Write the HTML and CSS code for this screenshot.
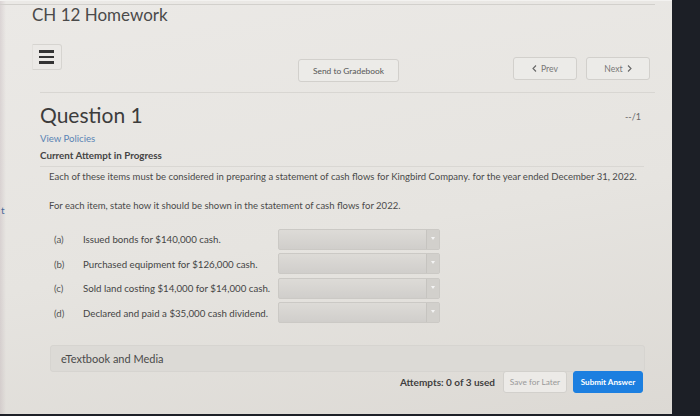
FILE: index.html
```html
<!DOCTYPE html>
<html lang="en">
<head>
    <meta charset="UTF-8">
    <meta name="viewport" content="width=device-width, initial-scale=1.0">
    <title>CH 12 Homework</title>
    <link rel="stylesheet" href="styles.css">
</head>
<body>
    <div class="screen">
        <div class="page">
            <span class="edge-mark">t</span>
            <h1 class="assignment-title">CH 12 Homework</h1>
            <div class="toolbar">
                <button class="menu-btn" aria-label="Menu">
                    <span></span><span></span><span></span>
                </button>
                <button class="btn btn-gradebook">Send to Gradebook</button>
                <div class="pager">
                    <button class="btn btn-nav">
                        <svg width="5" height="7" viewBox="0 0 5 7"><path d="M4 0.5 L1 3.5 L4 6.5" fill="none" stroke="#666" stroke-width="1.1"/></svg>
                        Prev
                    </button>
                    <button class="btn btn-nav">
                        Next
                        <svg width="5" height="7" viewBox="0 0 5 7"><path d="M1 0.5 L4 3.5 L1 6.5" fill="none" stroke="#666" stroke-width="1.1"/></svg>
                    </button>
                </div>
            </div>
            <div class="question">
                <div class="question-head">
                    <h2>Question 1</h2>
                    <span class="score">--/1</span>
                </div>
                <a class="policies" href="#">View Policies</a>
                <p class="attempt-state">Current Attempt in Progress</p>
                <div class="question-body">
                    <p>Each of these items must be considered in preparing a statement of cash flows for Kingbird Company. for the year ended December 31, 2022.</p>
                    <p>For each item, state how it should be shown in the statement of cash flows for 2022.</p>
                    <div class="items">
                        <div class="item">
                            <span class="item-label">(a)</span>
                            <span class="item-text">Issued bonds for $140,000 cash.</span>
                            <div class="dropdown"><span class="caret"></span></div>
                        </div>
                        <div class="item">
                            <span class="item-label">(b)</span>
                            <span class="item-text">Purchased equipment for $126,000 cash.</span>
                            <div class="dropdown"><span class="caret"></span></div>
                        </div>
                        <div class="item">
                            <span class="item-label">(c)</span>
                            <span class="item-text">Sold land costing $14,000 for $14,000 cash.</span>
                            <div class="dropdown"><span class="caret"></span></div>
                        </div>
                        <div class="item">
                            <span class="item-label">(d)</span>
                            <span class="item-text">Declared and paid a $35,000 cash dividend.</span>
                            <div class="dropdown"><span class="caret"></span></div>
                        </div>
                    </div>
                    <div class="media">eTextbook and Media</div>
                </div>
                <div class="actions">
                    <span class="attempts">Attempts: 0 of 3 used</span>
                    <button class="btn btn-save">Save for Later</button>
                    <button class="btn btn-submit">Submit Answer</button>
                </div>
            </div>
        </div>
        <div class="bezel"></div>
    </div>
</body>
</html>
```

FILE: styles.css
```css
body {
    margin: 0;
    font-family: 'Lato', 'Liberation Sans', sans-serif;
    color: #3c3c3c;
    background: #1d2027;
}
.screen {
    display: flex;
    height: 416px;
    overflow: hidden;
}
.page {
    position: relative;
    width: 672px;
    height: 414px;
    padding: 0 28px 0 32px;
    box-sizing: border-box;
    background: linear-gradient(170deg, #ebe9e6 0%, #e6e4e0 55%, #dcd9d4 100%);
    border-top: 1px solid #f3f2f0;
}
.page::before {
    content: "";
    position: absolute;
    left: 0;
    top: 0;
    bottom: 0;
    width: 6px;
    background: linear-gradient(to right, rgba(170, 150, 160, 0.25), rgba(170, 150, 160, 0));
}
.page::after {
    content: "";
    position: absolute;
    left: 0;
    right: 17px;
    top: 3px;
    border-bottom: 1px solid #d2d0cc;
}
.bezel {
    flex: 1;
    background: #1c1f26;
}
.edge-mark {
    position: absolute;
    left: 1px;
    top: 203px;
    font-size: 10px;
    color: #4a6a99;
}
.assignment-title {
    margin: 3px 0 0;
    font-size: 17px;
    font-weight: 400;
    line-height: 22px;
    color: #4a4a4a;
}
.toolbar {
    display: flex;
    align-items: flex-start;
    margin-top: 18px;
    padding-bottom: 10px;
    margin-left: 8px;
    border-bottom: 1px solid #d8d6d2;
    margin-right: -11px;
}
.menu-btn {
    display: flex;
    flex-direction: column;
    justify-content: center;
    gap: 3px;
    width: 30px;
    height: 26px;
    margin-left: -8px;
    padding: 0 7px 0 6px;
    border: 1px solid #d6d4d0;
    border-left-color: #e2e0dc;
    border-radius: 0 3px 3px 0;
    background: #ebe9e6;
}
.menu-btn span {
    display: block;
    height: 2.5px;
    background: #333;
}
.btn {
    font-family: inherit;
    font-size: 8.4px;
    color: #555;
    background: #ecebe8;
    border: 1px solid #d2d0cc;
    border-radius: 3px;
    padding: 0;
    white-space: nowrap;
    cursor: pointer;
}
.btn-gradebook {
    width: 101px;
    height: 23px;
    margin: 15px 0 0 236px;
}
.pager {
    display: flex;
    gap: 9px;
    margin: 13px 0 0 114px;
}
.btn-nav {
    display: flex;
    align-items: center;
    justify-content: center;
    gap: 4px;
    width: 64px;
    height: 23px;
    font-size: 8.6px;
    color: #777;
}
.question {
    padding-left: 8px;
}
.question-head {
    display: flex;
    justify-content: space-between;
    align-items: flex-start;
    margin-top: 9px;
}
.question-head h2 {
    margin: 0;
    font-size: 21px;
    font-weight: 400;
    line-height: 26px;
    color: #3c3c3c;
}
.score {
    margin: 9px 3px 0 0;
    font-size: 9px;
    color: #666;
}
.policies {
    display: block;
    margin-top: 5px;
    font-size: 9.6px;
    color: #5a84b4;
    text-decoration: none;
}
.attempt-state {
    margin: 5px 0 0;
    font-size: 9.8px;
    font-weight: 700;
    color: #444;
}
.question-body {
    margin-top: 5px;
    padding: 0 0 0 9px;
    border-top: 1px solid #d9d7d3;
}
.question-body p {
    margin: 3px 0 0;
    font-size: 9.5px;
    line-height: 14px;
    color: #4a4a4a;
}
.question-body p + p {
    margin-top: 15px;
}
.items {
    display: flex;
    flex-direction: column;
    gap: 4.5px;
    margin-top: 16px;
    padding-left: 5px;
}
.item {
    display: flex;
    align-items: center;
    font-size: 9.7px;
    color: #444;
    height: 20px;
}
.item-label {
    width: 29px;
    color: #555;
}
.item-text {
    width: 195px;
}
.dropdown {
    position: relative;
    width: 160px;
    height: 19px;
    border: 1px solid #cbc9c5;
    border-radius: 2px;
    background: linear-gradient(#dddbd7, #d0cecb);
}
.caret {
    position: absolute;
    right: 0;
    top: 0;
    bottom: 0;
    width: 12px;
    border-left: 1px solid #c6c4c0;
    background: #d2d0cc;
}
.caret::after {
    content: "";
    position: absolute;
    left: 4px;
    top: 7px;
    border: 2px solid transparent;
    border-top: 3px solid #f4f4f4;
}
.media {
    margin: 22px 0 0 1px;
    width: 583px;
    height: 25px;
    line-height: 25px;
    padding-left: 10px;
    font-size: 11px;
    color: #4a4a4a;
    background: #dcdad6;
    border: 1px solid #d6d4d0;
    border-radius: 3px;
}
.actions {
    display: flex;
    justify-content: flex-end;
    align-items: center;
    gap: 6px;
    width: 603px;
    margin-top: -1px;
}
.attempts {
    margin-right: 2px;
    font-size: 10px;
    font-weight: 700;
    color: #3f3f3f;
}
.btn-save {
    width: 64px;
    height: 22px;
    font-size: 8.3px;
    color: #999;
    background: #eceae7;
}
.btn-submit {
    width: 70px;
    height: 22px;
    font-size: 8.1px;
    font-weight: 700;
    color: #fff;
    background: #1c7fe0;
    border-color: #1c7fe0;
}
```
